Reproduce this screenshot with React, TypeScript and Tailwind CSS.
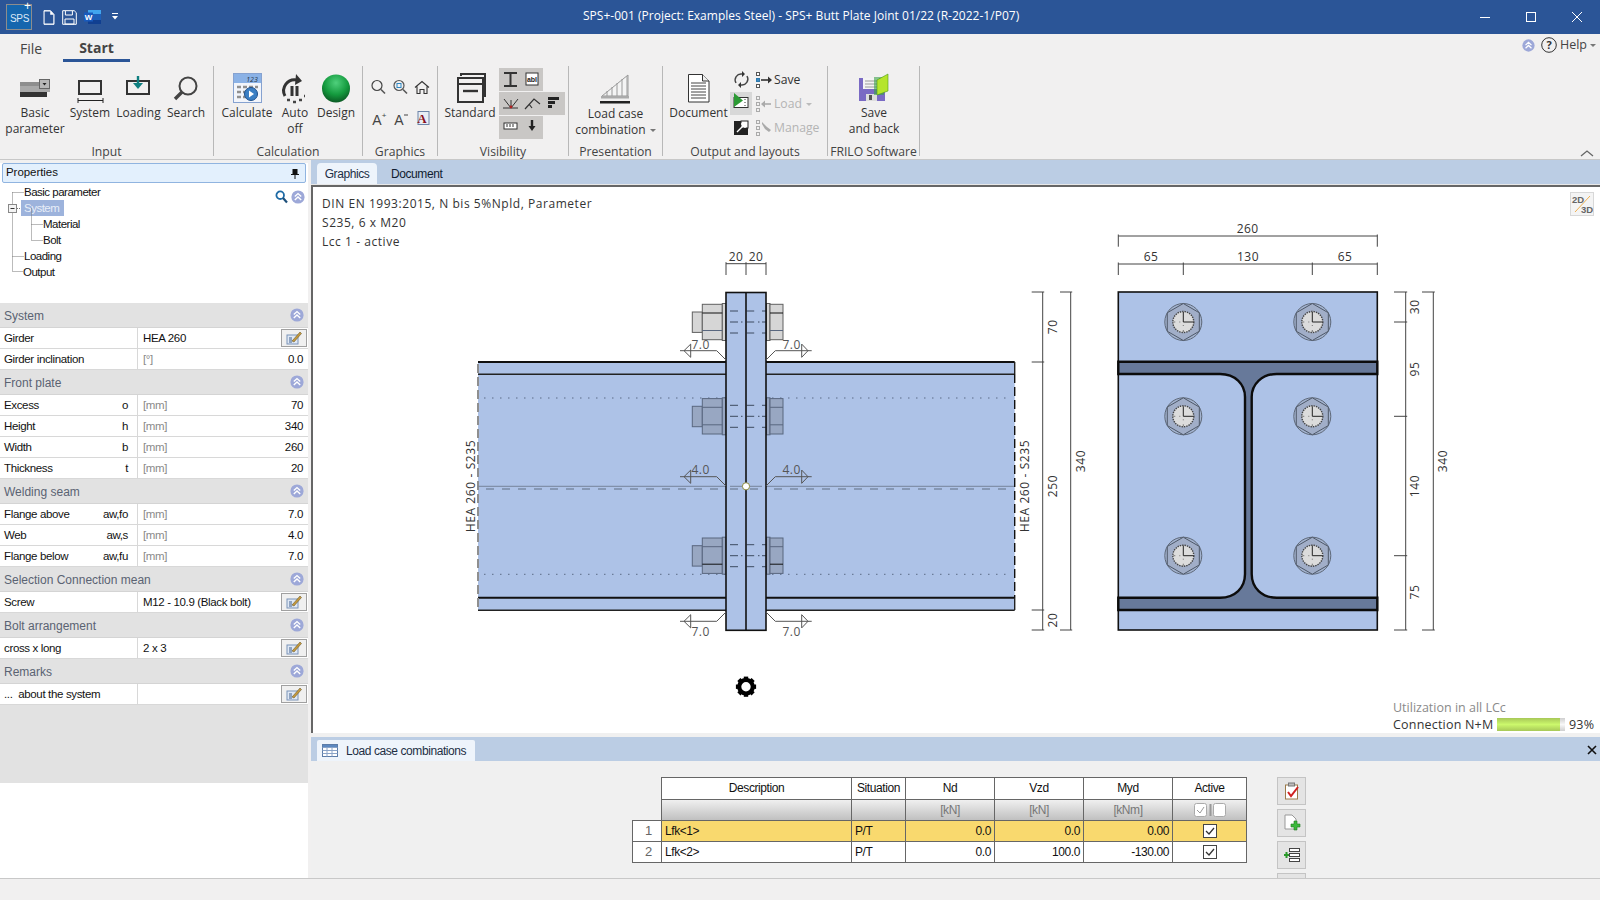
import React from "react";

const BLUE = "#adc2e7";
const DARK = "#67799a";
const DIM = "#444";

function Badge({ size = 14 }: { size?: number }) {
  return (
    <svg width={size} height={size} viewBox="0 0 14 14" className="shrink-0">
      <circle cx="7" cy="7" r="6.6" fill="#9da8d8" />
      <path d="M3.8 6.6 7 3.6l3.2 3M3.8 10 7 7l3.2 3" fill="none" stroke="#fff" strokeWidth="1.4" />
    </svg>
  );
}

function EditBtn() {
  return (
    <div className="w-[26px] h-[18px] mr-[1px] shrink-0 border border-[#a0a0a0] bg-[#f0f0f0] flex items-center justify-center">
      <svg width="16" height="14" viewBox="0 0 16 14">
        <rect x="1" y="4" width="11" height="9" fill="#dfe8f5" stroke="#7b93b8" />
        <path d="M3 7h3M3 9h3M3 11h3" stroke="#41618f" />
        <path d="M6 10 14 1l1.5 1.5L8 11z" fill="#c59a3d" stroke="#5b4a20" strokeWidth=".5" />
      </svg>
    </div>
  );
}

function Section({ title }: { title: string }) {
  return (
    <div className="h-[25px] bg-[#e2e2e2] flex items-center justify-between pl-[4px] pr-[4px] text-[12px] text-[#5a6372] border-b border-[#d4d4d4]">
      <span className="mt-[1px]">{title}</span>
      <Badge />
    </div>
  );
}

function Row({ label, sym, unit, value, edit }: { label: string; sym?: string; unit?: string; value?: string; edit?: boolean }) {
  return (
    <div className="h-[21px] bg-white flex items-center border-b border-[#d8d8d8] text-[11.5px] tracking-[-0.35px] text-[#111]">
      <div className="w-[138px] h-full shrink-0 flex items-center justify-between pt-[1px] pl-[4px] pr-[9px] border-r border-[#d8d8d8]">
        <span>{label}</span>
        {sym ? <span>{sym}</span> : null}
      </div>
      <div className="flex-1 h-full flex items-center justify-between pt-[1px] pl-[5px] pr-[5px]">
        {unit ? <span className="text-[#8a8a8a]">{unit}</span> : <span>{edit ? value : ""}</span>}
        {edit ? null : <span>{value}</span>}
      </div>
      {edit ? <EditBtn /> : null}
    </div>
  );
}

function Big({ left, w, label, label2, caret, children }: { left: number; w: number; label: string; label2?: string; caret?: boolean; children?: React.ReactNode }) {
  return (
    <div className="shrink-0 flex flex-col items-center pt-[2px]" style={{ width: w }}>
      <svg width={w} height={37} viewBox={`${left} 68 ${w} 37`} className="overflow-visible">
        {children}
      </svg>
      <div className="text-[12px] leading-[16px] text-center text-[#333] whitespace-nowrap">{label}</div>
      {label2 ? (
        <div className="text-[12px] leading-[16px] text-center text-[#333] whitespace-nowrap">
          {label2}
          {caret ? <span className="inline-block ml-[4px] mb-[2px] border-x-[3px] border-x-transparent border-t-[3px] border-t-[#777]" /> : null}
        </div>
      ) : null}
    </div>
  );
}

function Group({ w, label, children }: { w: number; label: string; children: React.ReactNode }) {
  return (
    <div className="shrink-0 h-[90px] mt-[4px] border-r border-[#b8b8b8] flex flex-col" style={{ width: w }}>
      <div className="h-[78px] shrink-0 flex items-start">{children}</div>
      <div className="h-[16px] shrink-0 leading-[16px] text-center text-[12.2px] text-[#444] whitespace-nowrap">{label}</div>
    </div>
  );
}

function VT({ x, y, children, size = 12 }: { x: number; y: number; children: React.ReactNode; size?: number }) {
  return (
    <text x={x} y={y} transform={`rotate(-90 ${x} ${y})`} textAnchor="middle" dominantBaseline="central" fontSize={size} letterSpacing=".6" fill="#333">
      {children}
    </text>
  );
}

function HT({ x, y, children, fill = "#333" }: { x: number; y: number; children: React.ReactNode; fill?: string }) {
  return (
    <text x={x} y={y} textAnchor="middle" dominantBaseline="central" fontSize="12" letterSpacing=".5" fill={fill}>
      {children}
    </text>
  );
}

function SideBolt({ cy, fill, stroke, upper, lower }: { cy: number; fill: string; stroke: string; upper: string; lower: string }) {
  return (
    <g stroke={stroke} strokeWidth="1">
      <rect x="692.3" y={cy - 10} width="10" height="20.4" fill={fill} />
      <rect x="702.3" y={cy - 17.7} width="20" height="35.4" fill={fill} />
      <rect x="722.3" y={cy - 18.5} width="3.7" height="37" fill={fill} />
      <rect x="766.5" y={cy - 18.5} width="3.5" height="37" fill={fill} />
      <rect x="770" y={cy - 17.7} width="13" height="35.4" fill={fill} />
      <path d={`M702.3 ${cy - 9}h20M770 ${cy - 9}h13`} stroke={upper} />
      <path d={`M702.3 ${cy + 8.5}h20M770 ${cy + 8.5}h13`} stroke={lower} />
    </g>
  );
}

function FrontBolt({ cx, cy }: { cx: number; cy: number }) {
  const R = 18.5;
  const hx = R * 0.866;
  return (
    <g>
      <circle cx={cx} cy={cy} r={R} fill="#a3b3cf" stroke="#5e6878" strokeWidth="1" />
      <polygon points={`${cx},${cy - R} ${cx + hx},${cy - R / 2} ${cx + hx},${cy + R / 2} ${cx},${cy + R} ${cx - hx},${cy + R / 2} ${cx - hx},${cy - R / 2}`} fill="#a1aec8" stroke="#4e5868" strokeWidth="1" />
      <circle cx={cx} cy={cy} r="10.5" fill="#dcdcdc" stroke="#444" strokeWidth="1.4" strokeDasharray="1.4 1" />
      <path d={`M${cx} ${cy}V${cy - 10}M${cx} ${cy}H${cx + 10}`} stroke="#222" strokeWidth="1" />
      <path d={`M${cx - 10} ${cy}h2M${cx - 4} ${cy}h1M${cx} ${cy + 3}v1M${cx} ${cy + 8}v2`} stroke="#777" strokeWidth="1" />
    </g>
  );
}

function Weld({ dir, y0, yl, label, ty }: { dir: 1 | -1; y0: number; yl: number; label: string; ty: number }) {
  const x0 = dir === -1 ? 726 : 766;
  const bend = x0 + dir * 9.3;
  const end = dir === -1 ? 680 : 811.7;
  const tip = dir === -1 ? 684 : 808;
  const base = dir === -1 ? 690.7 : 801.7;
  const tx = dir === -1 ? 700.7 : 791.7;
  return (
    <g fill="none" stroke="#555" strokeWidth="1">
      <path d={`M${x0} ${y0}L${bend} ${yl}H${end}`} />
      <path d={`M${tip} ${yl}L${base} ${yl - 6.6}V${yl + 6.6}Z`} />
      <g stroke="none">
        <HT x={tx} y={ty} fill="#555">
          {label}
        </HT>
      </g>
    </g>
  );
}

function VDim({ x, x0, ticks }: { x: number; x0: number; ticks: number[] }) {
  return (
    <g stroke={DIM} strokeWidth="1" fill="none">
      <path d={`M${x} ${ticks[0]}V${ticks[ticks.length - 1]}`} />
      {ticks.map((t) => (
        <path key={t} d={`M${x0} ${t}H${x + 1.5}`} />
      ))}
    </g>
  );
}

function HDim({ y, y1, ticks }: { y: number; y1: number; ticks: number[] }) {
  return (
    <g stroke={DIM} strokeWidth="1" fill="none">
      <path d={`M${ticks[0]} ${y}H${ticks[ticks.length - 1]}`} />
      {ticks.map((t) => (
        <path key={t} d={`M${t} ${y - 1.5}V${y1}`} />
      ))}
    </g>
  );
}

function Drawing() {
  const bolts = [322, 416.3, 555.7];
  const gearTeeth = [0, 45, 90, 135, 180, 225, 270, 315];
  return (
    <svg width="1287" height="546" className="absolute left-0 top-0" style={{ fontFamily: '"Open Sans", sans-serif' }}>
      <g transform="translate(-313 -187)">
        {/* side view beam */}
        <rect x="478" y="362" width="536.7" height="248.3" fill={BLUE} />
        <path d="M478 362H726M766 362H1014.7" stroke="#111" strokeWidth="2" />
        <path d="M478 374.3H726M766 374.3H1014.7" stroke="#222" strokeWidth="1.6" />
        <path d="M478 597.7H726M766 597.7H1014.7" stroke="#111" strokeWidth="2" />
        <path d="M478 610.3H726M766 610.3H1014.7" stroke="#222" strokeWidth="1.6" />
        <path d="M478 364V610" stroke="#8f8f8f" strokeWidth="2" strokeDasharray="9 4" />
        <path d="M1014.7 374V598" stroke="#111" strokeWidth="1.4" strokeDasharray="9 4" />
        <path d="M1014.7 362V374M1014.7 598V610" stroke="#222" strokeWidth="1.4" />
        <path d="M484 398H1008M484 574.3H1008" stroke="#5b6b86" strokeWidth="1" strokeDasharray="1.5 6.5" />
        <path d="M478 486.3H1014" stroke="#76849c" strokeWidth="1" />
        <path d="M486 489H1008" stroke="#7a8aa5" strokeWidth="1.4" strokeDasharray="8 8" />
        {bolts.map((b, i) => (
          <SideBolt
            key={b}
            cy={b}
            fill={i === 0 ? "#d6d6d6" : "#98a7c2"}
            stroke={i === 0 ? "#606060" : "#59677f"}
            upper={i === 0 ? "#111" : "#59677f"}
            lower={i === 2 ? "#111" : "#59677f"}
          />
        ))}
        <rect x="726" y="292.5" width="40" height="337.8" fill={BLUE} />
        {bolts.map((b) => (
          <path key={b} d={`M730 ${b - 11}h8M746.7 ${b - 11}h7.5M762 ${b - 11}h4M730 ${b + 11}h8M746.7 ${b + 11}h7.5M762 ${b + 11}h4M730 ${b}h8M741 ${b}h1.5M746.7 ${b}h7.5M758 ${b}h1.5M762 ${b}h4`} stroke="#3c4a60" strokeWidth="1" />
        ))}
        <path d="M730 486.3H762" stroke="#76849c" />
        <path d="M730 489h8M750 489h8" stroke="#7a8aa5" strokeWidth="1.4" />
        <rect x="726" y="292.5" width="40" height="337.8" fill="none" stroke="#111" strokeWidth="1.6" />
        <path d="M746 292.5V630" stroke="#111" strokeWidth="1.6" />
        <circle cx="746" cy="486.3" r="3.6" fill="#fff" stroke="#8c8c40" strokeWidth="1" />
        <Weld dir={-1} y0={360} yl={350.7} label="7.0" ty={344} />
        <Weld dir={1} y0={360} yl={350.7} label="7.0" ty={344} />
        <Weld dir={-1} y0={486} yl={476.7} label="4.0" ty={469.7} />
        <Weld dir={1} y0={486} yl={476.7} label="4.0" ty={469.7} />
        <Weld dir={-1} y0={612} yl={621.3} label="7.0" ty={631.7} />
        <Weld dir={1} y0={612} yl={621.3} label="7.0" ty={631.7} />
        <HDim y={263.7} y1={275} ticks={[726, 746, 766]} />
        <HT x={736} y={256.7}>20</HT>
        <HT x={756} y={256.7}>20</HT>
        <VT x={470.7} y={486}>HEA 260 - S235</VT>
        <VT x={1024} y={486}>HEA 260 - S235</VT>

        <VDim x={1042.7} x0={1031.7} ticks={[292, 362, 610, 630]} />
        <VDim x={1070.7} x0={1060} ticks={[292, 630]} />
        <VT x={1052.7} y={326.7}>70</VT>
        <VT x={1052.7} y={486}>250</VT>
        <VT x={1052.7} y={620}>20</VT>
        <VT x={1080.7} y={461}>340</VT>

        {/* front view */}
        <rect x="1118.3" y="292" width="259" height="338" fill={BLUE} stroke="#111" strokeWidth="1.6" />
        <path
          d="M1118.3 361.7H1377.3V374H1276.7C1262 374 1251.7 384 1251.7 397V574C1251.7 588 1262 597.7 1276.7 597.7H1377.3V610H1118.3V597.7H1220C1235 597.7 1245 588 1245 574V397C1245 384 1235 374 1220 374H1118.3Z"
          fill={DARK}
          stroke="#0c0c0c"
          strokeWidth="2.4"
        />
        {bolts.map((b) => (
          <g key={b}>
            <FrontBolt cx={1183.3} cy={b} />
            <FrontBolt cx={1312.3} cy={b} />
          </g>
        ))}
        <HDim y={236} y1={246.7} ticks={[1118.3, 1377.3]} />
        <HDim y={264} y1={275} ticks={[1118.3, 1183.3, 1312.3, 1377.3]} />
        <HT x={1247.7} y={228.3}>260</HT>
        <HT x={1151} y={256.7}>65</HT>
        <HT x={1248} y={256.7}>130</HT>
        <HT x={1345} y={256.7}>65</HT>
        <VDim x={1405.7} x0={1394} ticks={[292, 322, 416.3, 555.7, 630]} />
        <VDim x={1433.3} x0={1422} ticks={[292, 630]} />
        <VT x={1414.3} y={306.7}>30</VT>
        <VT x={1414.3} y={369}>95</VT>
        <VT x={1414.3} y={486}>140</VT>
        <VT x={1414.3} y={592}>75</VT>
        <VT x={1442.7} y={461}>340</VT>

        {/* gear */}
        <circle cx="746" cy="686.7" r="6.8" fill="none" stroke="#000" strokeWidth="4.2" />
        {gearTeeth.map((a) => (
          <path key={a} d="M746 676.6v3" transform={`rotate(${a} 746 686.7)`} stroke="#000" strokeWidth="4.4" />
        ))}
      </g>
    </svg>
  );
}

function HeadCell({ children, last }: { children?: React.ReactNode; last?: boolean }) {
  return <div className={`h-[22px] pb-[1px] border-t border-l border-[#666] bg-white flex items-center justify-center ${last ? "border-r" : ""}`}>{children}</div>;
}
function SubCell({ children, last }: { children?: React.ReactNode; last?: boolean }) {
  return <div className={`h-[21px] pb-[1px] border-t border-l border-[#666] bg-gradient-to-b from-[#f0f0f0] to-[#c0c0c0] flex items-center justify-center text-[#777] ${last ? "border-r" : ""}`}>{children}</div>;
}
function Cell({ children, y, right, center, last, bottom }: { children?: React.ReactNode; y?: boolean; right?: boolean; center?: boolean; last?: boolean; bottom?: boolean }) {
  return (
    <div
      className={`h-[21px] pb-[1px] border-t border-l border-[#666] flex items-center px-[3px] ${y ? "bg-[#f9d96e]" : "bg-white"} ${right ? "justify-end" : ""} ${center ? "justify-center" : ""} ${last ? "border-r" : ""} ${bottom ? "border-b h-[22px]" : ""}`}
    >
      {children}
    </div>
  );
}
function Check() {
  return (
    <svg width="14" height="14" viewBox="0 0 14 14">
      <rect x=".5" y=".5" width="13" height="13" fill="#fff" stroke="#444" />
      <path d="M3 7l3 3 5-6" fill="none" stroke="#333" strokeWidth="1.3" />
    </svg>
  );
}
function SideBtn({ children }: { children?: React.ReactNode }) {
  return <div className="w-[29px] h-[28px] shrink-0 bg-[#e4e4e4] border border-[#c4c4c4] flex items-center justify-center">{children}</div>;
}

function Ribbon() {
  return (
    <div className="flex h-[97px] relative">
      <Group w={214} label="Input">
        <Big left={0} w={70} label="Basic" label2="parameter">
          <rect x="20" y="82" width="26" height="4" fill="#8e8e8e" />
          <rect x="20" y="86" width="30" height="6" fill="#a9a9a9" />
          <rect x="20" y="92" width="27" height="5" fill="#333" />
          <rect x="39.5" y="79.5" width="10" height="9" fill="#b8b8b8" stroke="#666" />
          <path d="M42.5 83h4l-2 2.5z" fill="#222" />
        </Big>
        <Big left={70} w={40} label="System">
          <rect x="79" y="81" width="22" height="13" fill="none" stroke="#333" strokeWidth="2" />
          <path d="M78 100.5h25M78 98v5M103 98v5" stroke="#222" strokeWidth="1" />
        </Big>
        <Big left={110} w={57} label="Loading">
          <rect x="127" y="81" width="22" height="13" fill="none" stroke="#333" strokeWidth="2" />
          <path d="M138 76v8" stroke="#0f7f80" strokeWidth="2.4" />
          <path d="M133 83h10l-5 6z" fill="#0f7f80" />
        </Big>
        <Big left={167} w={38} label="Search">
          <circle cx="188" cy="86" r="8.5" fill="none" stroke="#444" strokeWidth="2" />
          <path d="M182 92l-7 7" stroke="#444" strokeWidth="3.4" />
        </Big>
      </Group>
      <Group w={149} label="Calculation">
        <Big left={213} w={66} label="Calculate">
          <rect x="232.5" y="73.5" width="28" height="29" fill="#f2f5fb" stroke="#86a2d0" />
          <rect x="233" y="74" width="27" height="9" fill="#8bb2e6" />
          <text x="251" y="81.5" fontSize="7" fontStyle="italic" textAnchor="middle" fill="#234">123</text>
          <path d="M236 87h4M242 87h4M248 87h4M254 87h3M236 92h4M242 92h4M236 97h4M242 97h4" stroke="#909090" strokeWidth="2.4" />
          <circle cx="250" cy="94" r="6.5" fill="#3b7fc4" stroke="#1e4f8c" />
          <path d="M248 90.5v7l5-3.5z" fill="#fff" />
        </Big>
        <Big left={279} w={30} label="Auto" label2="off">
          <path d="M284 96a11 11 0 0 1 12-16" fill="none" stroke="#333" strokeWidth="3" />
          <path d="M295 74l6 7-7 4z" fill="#333" />
          <path d="M291 86v10M296 86v10" stroke="#333" strokeWidth="3" />
          <path d="M286 100h3M292 102h3M298 100h3M303 96h1" stroke="#444" strokeWidth="2.4" />
        </Big>
        <Big left={309} w={52} label="Design">
          <defs>
            <radialGradient id="gs" cx="50%" cy="30%" r="70%">
              <stop offset="0" stopColor="#4fd07c" />
              <stop offset=".6" stopColor="#149a3e" />
              <stop offset="1" stopColor="#0b5a24" />
            </radialGradient>
          </defs>
          <circle cx="335" cy="88.5" r="14" fill="url(#gs)" />
        </Big>
      </Group>
      <Group w={75} label="Graphics">
        <svg width="74" height="76" viewBox="362 68 74 76" className="shrink-0">
          <circle cx="376" cy="87.5" r="5" fill="none" stroke="#444" strokeWidth="1.2" />
          <path d="M380 91.5l4 4" stroke="#555" strokeWidth="1.6" />
          <circle cx="398" cy="87.5" r="5" fill="none" stroke="#555" strokeWidth="1.2" />
          <rect x="396" y="85.5" width="4" height="4" fill="none" stroke="#2c87c4" />
          <path d="M402 91.5l4 4" stroke="#555" strokeWidth="1.6" />
          <path d="M414 89.5l7-6 7 6M416 88.5v7h3v-4h4v4h3v-7" fill="none" stroke="#333" strokeWidth="1.1" />
          <text x="376" y="127" fontSize="14" fill="#444" textAnchor="middle" fontFamily="Liberation Sans, sans-serif">A</text>
          <text x="383" y="120" fontSize="8" fill="#444" textAnchor="middle" fontFamily="Liberation Sans, sans-serif">+</text>
          <text x="398" y="127" fontSize="14" fill="#444" textAnchor="middle" fontFamily="Liberation Sans, sans-serif">A</text>
          <path d="M403 117h4" stroke="#444" />
          <rect x="417" y="113.5" width="11" height="13" fill="#e8edf5" stroke="#6d84a8" />
          <text x="421" y="125" fontSize="13" fontWeight="700" fill="#8a1020" textAnchor="middle" fontFamily="Liberation Serif, serif">A</text>
        </svg>
      </Group>
      <Group w={131} label="Visibility">
        <div className="pl-[3px] shrink-0">
          <Big left={440} w={58} label="Standard">
            <path d="M460 76V74h24v22h-2" fill="none" stroke="#333" strokeWidth="2" />
            <rect x="457" y="78" width="25" height="24" fill="#f1f0f0" stroke="#333" strokeWidth="2" />
            <path d="M457 84h25" stroke="#333" strokeWidth="2" />
            <path d="M462 91h15" stroke="#333" strokeWidth="2.4" />
          </Big>
        </div>
        <div className="flex flex-col gap-[1px] pt-[2px] shrink-0">
          <div className="w-[44px] h-[23px] bg-[#c9c7c5]">
            <svg width="44" height="23" viewBox="498 68 44 23">
              <path d="M503 73h13M503 86h13M509.5 73v13" stroke="#333" strokeWidth="2" />
              <rect x="525" y="73" width="12" height="12" fill="#fff" stroke="#333" />
              <text x="531" y="82" fontSize="7" fontWeight="700" textAnchor="middle" fill="#222" fontFamily="Liberation Sans, sans-serif">abl</text>
            </svg>
          </div>
          <div className="w-[66px] h-[23px] bg-[#c9c7c5]">
            <svg width="66" height="23" viewBox="498 92 66 23">
              <path d="M502 108h15M510 108l-7-9M510 108l7-9M510 108v-8" stroke="#333" fill="none" />
              <circle cx="510" cy="107" r="1.4" fill="#b02020" />
              <path d="M524 109l9-10 6 5M528 104l3 4" stroke="#333" fill="none" strokeWidth="1.2" />
              <path d="M547 97h11v3h-11zM547 101h7v3h-7zM547 105h4v3h-4z" fill="#222" />
            </svg>
          </div>
          <div className="w-[44px] h-[23px] bg-[#c9c7c5]">
            <svg width="44" height="23" viewBox="498 116 44 23">
              <rect x="503" y="123" width="13" height="6" fill="#fff" stroke="#333" />
              <path d="M506 124v3M509 124v3M512 124v3" stroke="#333" />
              <path d="M531 120v8" stroke="#222" strokeWidth="2.4" />
              <path d="M527.5 126h7l-3.5 5z" fill="#222" />
            </svg>
          </div>
        </div>
      </Group>
      <Group w={94} label="Presentation">
        <div className="pt-[1px] shrink-0">
          <Big left={568} w={93} label="Load case" label2="combination" caret>
            <path d="M601 95L627 74V95Z" fill="#f4f4f4" stroke="#999" strokeWidth="1" />
            <path d="M606 90v5M611 86v9M616 82v13M621 78v17M626 75v20" stroke="#9a9a9a" />
            <rect x="600" y="95" width="28" height="2.5" fill="#aaa" />
            <rect x="599" y="100" width="30" height="2.5" fill="#222" />
          </Big>
        </div>
      </Group>
      <Group w={165} label="Output and layouts">
        <div className="pl-[4px] shrink-0">
          <Big left={666} w={63} label="Document">
            <path d="M687.5 74.5h14l6.5 6.5v21h-20.5z" fill="#fff" stroke="#333" />
            <path d="M701.5 74.5v6.5h6.5" fill="#eee" stroke="#333" />
            <path d="M690 83h15M690 86h15M690 89h15M690 92h15M690 95h15M690 98h15" stroke="#444" />
          </Big>
        </div>
        <div className="flex flex-col pt-[2px] shrink-0 text-[12.2px]">
          <div className="h-[24px] flex items-center text-[#333]">
            <svg width="44" height="24" viewBox="729 68 44 24">
              <path d="M735 83a6 6 0 0 1 6-9M746 76a6 6 0 0 1-6 9" fill="none" stroke="#444" strokeWidth="1.4" />
              <path d="M741 71l3 3-3 3zM740 82l-3 3 3 3z" fill="#333" />
              <rect x="755.5" y="72.5" width="3" height="3" fill="#fff" stroke="#555" />
              <rect x="755.5" y="78.5" width="3" height="3" fill="#3a8ac4" stroke="#2d78ac" />
              <rect x="755.5" y="84.5" width="3" height="3" fill="#fff" stroke="#555" />
              <path d="M760 80h9" stroke="#333" strokeWidth="1.6" />
              <path d="M767 76.5l4 3.5-4 3.5z" fill="#333" />
            </svg>
            <span>Save</span>
          </div>
          <div className="h-[24px] flex items-center text-[#b4b4b4]">
            <svg width="44" height="24" viewBox="729 92 44 24">
              <rect x="729" y="92" width="22" height="23" fill="#d8d8d8" />
              <rect x="733" y="97.5" width="14" height="10" fill="#fff" stroke="#333" />
              <path d="M733 93v14l9-6.5z" fill="#2c9a34" />
              <path d="M744 99v1M744 102v1M744 105v1" stroke="#333" />
              <rect x="755.5" y="96.5" width="3" height="3" fill="none" stroke="#aaa" />
              <rect x="755.5" y="102.5" width="3" height="3" fill="none" stroke="#aaa" />
              <rect x="755.5" y="108.5" width="3" height="3" fill="none" stroke="#aaa" />
              <path d="M761 104h9" stroke="#aaa" strokeWidth="1.6" />
              <path d="M764 100.5l-4 3.5 4 3.5z" fill="#aaa" />
            </svg>
            <span>Load</span>
            <span className="inline-block ml-[4px] border-x-[3px] border-x-transparent border-t-[3px] border-t-[#bbb]" />
          </div>
          <div className="h-[24px] flex items-center text-[#b4b4b4]">
            <svg width="44" height="24" viewBox="729 116 44 24">
              <rect x="733" y="121" width="14" height="14" fill="#222" />
              <rect x="740" y="121" width="7" height="7" fill="#fff" stroke="#222" />
              <path d="M736 132l8-8M740 124h4v4" fill="none" stroke="#fff" strokeWidth="1.4" />
              <rect x="755.5" y="120.5" width="3" height="3" fill="none" stroke="#aaa" />
              <rect x="755.5" y="126.5" width="3" height="3" fill="none" stroke="#aaa" />
              <rect x="755.5" y="132.5" width="3" height="3" fill="none" stroke="#aaa" />
              <path d="M761 122l5 5 4 3-2 2-4-3-3-5z" fill="#aaa" />
            </svg>
            <span>Manage</span>
          </div>
        </div>
      </Group>
      <Group w={92} label="FRILO Software">
        <Big left={827} w={92} label="Save" label2="and back">
          <rect x="858" y="78" width="26" height="23" fill="#7a6ac4" />
          <rect x="862" y="78" width="16" height="11" fill="#f4f4f4" />
          <path d="M864 81h12M864 84h12M864 87h12" stroke="#9a9a9a" />
          <rect x="865" y="94" width="11" height="7" fill="#ddd" />
          <rect x="868" y="95" width="3" height="5" fill="#555" />
          <path d="M873 77h10v18h-10z" fill="#3aa04a" opacity=".6" />
          <path d="M876 80l11-6v17l-11 4z" fill="#b5e52c" stroke="#4d9a1a" strokeWidth=".6" />
        </Big>
      </Group>
      <svg width="14" height="8" viewBox="0 0 14 8" className="absolute right-[6px] bottom-[2px]">
        <path d="M1 7l6-5 6 5" fill="none" stroke="#666" strokeWidth="1.3" />
      </svg>
    </div>
  );
}

export default function App() {
  return (
    <div className="w-[1600px] h-[900px] overflow-hidden bg-[#f1f0f0] flex flex-col" style={{ fontFamily: '"Liberation Sans", Arial, sans-serif' }}>
      {/* title bar */}
      <div className="h-[34px] shrink-0 bg-[#2b5597] flex items-center relative text-white">
        <div className="ml-[6px] w-[26px] h-[26px] bg-[#1566ae] border border-[#8d8d8d] flex items-center justify-start relative shrink-0">
          <span className="text-[10px] leading-[10px] text-[#dce8f6] tracking-[-0.3px] mt-[4px] ml-[3px]">SPS</span>
          <span className="absolute right-[0px] top-[-5px] text-[12px] leading-[12px]">+</span>
        </div>
        <svg width="12" height="15" viewBox="0 0 12 15" className="ml-[11px] shrink-0">
          <path d="M1 .7h6.5L11 4.5v9.8H1z" fill="#fff" stroke="#fff" />
          <path d="M1.6 1.4h5.6v3.4h3.1v8.8H1.6z" fill="#2b5597" />
        </svg>
        <svg width="15" height="15" viewBox="0 0 15 15" className="ml-[7px] shrink-0">
          <path d="M.7.7h11.5l2.1 2v11.6H.7z" fill="none" stroke="#fff" />
          <path d="M3.4 1v4h7V1M3 9h9v5H3z" fill="none" stroke="#fff" />
        </svg>
        <svg width="17" height="16" viewBox="0 0 17 16" className="ml-[7px] shrink-0">
          <rect x="4" y="1" width="13" height="14" fill="#1d5fb8" />
          <rect x="4" y="1" width="13" height="4" fill="#41a5ee" />
          <rect x="4" y="11" width="13" height="4" fill="#103f91" />
          <rect x="0" y="3.5" width="9" height="9" fill="#185abd" />
          <text x="4.5" y="11" fontSize="8" fontWeight="700" fill="#fff" textAnchor="middle">W</text>
        </svg>
        <svg width="6" height="8" viewBox="0 0 6 8" className="ml-[11px] shrink-0">
          <path d="M0 .5h6" stroke="#fff" />
          <path d="M0 3h6L3 6.5z" fill="#fff" />
        </svg>
        <div className="absolute left-[583px] top-[7px] text-[12px] leading-[17px] tracking-[0.02px] whitespace-nowrap" style={{ fontFamily: '"Open Sans", sans-serif' }}>
          SPS+-001 (Project: Examples Steel) - SPS+ Butt Plate Joint 01/22 (R-2022-1/P07)
        </div>
        <svg width="130" height="34" viewBox="1470 0 130 34" className="ml-auto shrink-0">
          <path d="M1480 17.5h10" stroke="#fff" />
          <rect x="1526.5" y="12.5" width="9" height="9" fill="none" stroke="#fff" />
          <path d="M1572 12l10 10M1582 12l-10 10" stroke="#fff" />
        </svg>
      </div>

      {/* tabs */}
      <div className="h-[28px] shrink-0 flex items-start relative" style={{ fontFamily: '"Open Sans", sans-serif' }}>
        <div className="w-[63px] h-[28px] flex items-center pl-[20px] text-[14px] text-[#444]">File</div>
        <div className="w-[67px] h-[28px] pt-[1px] flex items-center justify-center border-b-[3px] border-[#2b5597] text-[14px] font-bold text-[#444]">Start</div>
        <div className="ml-auto h-[22px] flex items-center pr-[4px] text-[12.5px] text-[#444]">
          <Badge size={13} />
          <svg width="16" height="16" viewBox="0 0 16 16" className="ml-[6px] mr-[3px]">
            <circle cx="8" cy="8" r="7.3" fill="none" stroke="#333" />
            <text x="8" y="12" textAnchor="middle" fontSize="11" fontWeight="700" fill="#333">?</text>
          </svg>
          <span>Help</span>
          <span className="inline-block ml-[3px] border-x-[3px] border-x-transparent border-t-[3px] border-t-[#777]" />
        </div>
      </div>

      {/* ribbon */}
      <div className="shrink-0 border-b border-[#c8c8c8]" style={{ fontFamily: '"Open Sans", sans-serif' }}>
        <Ribbon />
      </div>

      {/* main */}
      <div className="flex-1 flex min-h-0">
        {/* left */}
        <div className="w-[308px] shrink-0 bg-white flex flex-col">
          <div className="h-[3px] bg-[#f1f0f0]" />
          <div className="h-[20px] mx-[2px] border border-[#90b4e0] rounded-[2px] bg-[#e3f0fd] flex items-center justify-between px-[3px] text-[11.5px] tracking-[-0.05px] text-[#111]">
            <span>Properties</span>
            <svg width="8" height="11" viewBox="0 0 8 11" className="mr-[3px]">
              <path d="M1.5 1h5v5h1.5v1H0V6h1.5zM3.5 7h1v4h-1z" fill="#111" />
            </svg>
          </div>
          <div className="h-[120px] relative pt-[1px] text-[11.5px] tracking-[-0.5px] text-[#111]">
            <svg width="60" height="100" className="absolute left-0 top-0">
              <path d="M12.5 9.5h11M12.5 9.5V88.5h10M12.5 73.5h11M17 25.5h4M31.5 25.5V57.5M31.5 41.5h11M31.5 57.5h11" stroke="#777" strokeDasharray="1 1" fill="none" />
              <rect x="8.5" y="21.5" width="8" height="8" fill="#f4f4f4" stroke="#888" />
              <path d="M10.5 25.5h4" stroke="#333" />
            </svg>
            <div className="h-[16px] leading-[16px] pl-[24px]">Basic parameter</div>
            <div className="h-[16px] leading-[16px] pl-[21px]">
              <span className="inline-block w-[43px] bg-[#9db3dc] text-[#e8eef8] pl-[3px]">System</span>
            </div>
            <div className="h-[16px] leading-[16px] pl-[43px]">Material</div>
            <div className="h-[16px] leading-[16px] pl-[43px]">Bolt</div>
            <div className="h-[16px] leading-[16px] pl-[24px]">Loading</div>
            <div className="h-[16px] leading-[16px] pl-[23px]">Output</div>
            <div className="absolute right-[3px] top-[7px] flex items-center gap-[3px]">
              <svg width="13" height="14" viewBox="0 0 13 14">
                <circle cx="5.2" cy="5.2" r="3.8" fill="#fff" stroke="#1d6aa5" strokeWidth="1.8" />
                <path d="M8 8l4 4.5" stroke="#1d4f7a" strokeWidth="2.2" />
              </svg>
              <Badge />
            </div>
          </div>
          <Section title="System" />
          <Row label="Girder" value="HEA 260" edit />
          <Row label="Girder inclination" unit="[°]" value="0.0" />
          <Section title="Front plate" />
          <Row label="Excess" sym="o" unit="[mm]" value="70" />
          <Row label="Height" sym="h" unit="[mm]" value="340" />
          <Row label="Width" sym="b" unit="[mm]" value="260" />
          <Row label="Thickness" sym="t" unit="[mm]" value="20" />
          <Section title="Welding seam" />
          <Row label="Flange above" sym="aw,fo" unit="[mm]" value="7.0" />
          <Row label="Web" sym="aw,s" unit="[mm]" value="4.0" />
          <Row label="Flange below" sym="aw,fu" unit="[mm]" value="7.0" />
          <Section title="Selection Connection mean" />
          <Row label="Screw" value="M12 - 10.9 (Black bolt)" edit />
          <Section title="Bolt arrangement" />
          <Row label="cross x long" value="2 x 3" edit />
          <Section title="Remarks" />
          <Row label={"...\u00a0\u00a0about the system"} value="" edit />
          <div className="h-[78px] bg-[#e2e2e2]" />
        </div>

        {/* right */}
        <div className="flex-1 min-w-0 pl-[3px] flex flex-col">
          <div className="h-[24px] shrink-0 bg-[#bbcde4] flex items-end pl-[6px] text-[12px] tracking-[-0.42px]">
            <div className="w-[60px] h-[21px] rounded-t-[4px] bg-[#eef4fb] flex items-center justify-center text-[#1d2f45]">Graphics</div>
            <div className="ml-[14px] h-[21px] flex items-center text-[#101c30]">Document</div>
          </div>
          <div className="h-[1px] shrink-0 bg-[#e8e8e8]" />
          <div className="h-[548px] shrink-0 bg-white border-t-2 border-l-2 border-[#666] relative overflow-hidden">
            <Drawing />
            <div className="relative pl-[9px] pt-[7px] text-[12px] leading-[19px] tracking-[0.55px] text-[#333]" style={{ fontFamily: '"Open Sans", sans-serif' }}>
              <div>DIN EN 1993:2015, N bis 5%Npld, Parameter</div>
              <div>S235, 6 x M20</div>
              <div>Lcc 1 - active</div>
            </div>
            <div className="absolute right-[6px] top-[5px] w-[24px] h-[24px] bg-[#f4f4f4] border border-[#d8d8d8]">
              <svg width="22" height="22" viewBox="0 0 22 22">
                <path d="M4 19 19 3" stroke="#f0b050" />
                <text x="1" y="10" fontSize="9.5" fontWeight="700" fill="#666">2D</text>
                <text x="10" y="19.5" fontSize="9.5" fontWeight="700" fill="#666">3D</text>
              </svg>
            </div>
            <div className="absolute left-[1080px] bottom-[0px] w-[206px] text-[12.5px] leading-[17px]" style={{ fontFamily: '"Open Sans", sans-serif' }}>
              <div className="text-[#8a8a8a]">Utilization in all LCc</div>
              <div className="flex items-center text-[#333] tracking-[0.2px]">
                <span className="w-[104px] shrink-0 whitespace-nowrap">Connection N+M</span>
                <div className="w-[68px] h-[13px] bg-gradient-to-b from-[#cfcfcf] via-[#f8f8f8] to-[#cfcfcf] shrink-0">
                  <div className="h-full bg-gradient-to-b from-[#a8c858] via-[#ccf86c] to-[#a8c858]" style={{ width: "93%" }} />
                </div>
                <span className="ml-[4px]">93%</span>
              </div>
            </div>
          </div>
          <div className="h-[4px] shrink-0 bg-[#f0f0f0]" />
          <div className="h-[24px] shrink-0 bg-[#bbcde4] flex items-end pl-[6px] text-[12px] tracking-[-0.42px] text-[#1d2f45] relative">
            <div className="w-[158px] h-[21px] rounded-t-[2px] bg-[#eef4fb] flex items-center pl-[5px]">
              <svg width="16" height="13" viewBox="0 0 16 13" className="mr-[8px]">
                <rect x=".5" y=".5" width="15" height="12" fill="#fff" stroke="#5c7ca8" />
                <path d="M.5 3.5h15M.5 6.5h15M.5 9.5h15M5 3.5v9M10 3.5v9" stroke="#8aa4c8" />
                <rect x="1" y="1" width="14" height="2" fill="#5c88c0" />
              </svg>
              <span>Load case combinations</span>
            </div>
            <svg width="10" height="10" viewBox="0 0 10 10" className="absolute right-[3px] top-[8px]">
              <path d="M1 1l8 8M9 1 1 9" stroke="#111" strokeWidth="1.6" />
            </svg>
          </div>
          <div className="flex-1 min-h-0 overflow-hidden bg-[#f0f0f0] flex items-start text-[12px] tracking-[-0.42px] text-[#111]">
            <div className="ml-[321px] mt-[16px] grid grid-cols-[29px_190px_54px_89px_89px_89px_75px] shrink-0">
              <div />
              <HeadCell>Description</HeadCell>
              <HeadCell>Situation</HeadCell>
              <HeadCell>Nd</HeadCell>
              <HeadCell>Vzd</HeadCell>
              <HeadCell>Myd</HeadCell>
              <HeadCell last>Active</HeadCell>
              <div />
              <SubCell />
              <SubCell />
              <SubCell>[kN]</SubCell>
              <SubCell>[kN]</SubCell>
              <SubCell>[kNm]</SubCell>
              <SubCell last>
                <svg width="32" height="14" viewBox="0 0 32 14">
                  <rect x=".5" y=".5" width="12" height="13" rx="2" fill="#fff" stroke="#aaa" />
                  <path d="M3 7l3 3 4-6" fill="none" stroke="#999" />
                  <path d="M16.5 1v12" stroke="#999" strokeWidth="2" />
                  <rect x="19.5" y=".5" width="12" height="13" rx="2" fill="#fff" stroke="#aaa" />
                </svg>
              </SubCell>
              <Cell center>
                <span className="text-[#666] text-[13px] ml-[3px]">1</span>
              </Cell>
              <Cell y>Lfk&lt;1&gt;</Cell>
              <Cell y>P/T</Cell>
              <Cell y right>0.0</Cell>
              <Cell y right>0.0</Cell>
              <Cell y right>0.00</Cell>
              <Cell y center last>
                <Check />
              </Cell>
              <Cell center bottom>
                <span className="text-[#666] text-[13px] ml-[3px]">2</span>
              </Cell>
              <Cell bottom>Lfk&lt;2&gt;</Cell>
              <Cell bottom>P/T</Cell>
              <Cell right bottom>0.0</Cell>
              <Cell right bottom>100.0</Cell>
              <Cell right bottom>-130.00</Cell>
              <Cell center last bottom>
                <Check />
              </Cell>
            </div>
            <div className="ml-[30px] mt-[16px] flex flex-col gap-[4px] shrink-0">
              <SideBtn>
                <svg width="16" height="18" viewBox="0 0 16 18">
                  <rect x="1.5" y="3" width="12" height="14" fill="#fff" stroke="#9a7a4a" />
                  <rect x="4.5" y="1" width="6" height="3" fill="#bbb" stroke="#777" />
                  <path d="M4 10l3 4 7-9" fill="none" stroke="#d02020" strokeWidth="2" />
                </svg>
              </SideBtn>
              <SideBtn>
                <svg width="18" height="18" viewBox="0 0 18 18">
                  <path d="M2 1h7l4 4v10H2z" fill="#fff" stroke="#999" />
                  <path d="M11 7h3v3h3v3h-3v3h-3v-3H8v-3h3z" fill="#3cb83c" stroke="#1f7a1f" strokeWidth=".6" />
                </svg>
              </SideBtn>
              <SideBtn>
                <svg width="18" height="16" viewBox="0 0 18 16">
                  <rect x="6.5" y="1.5" width="10" height="3" fill="#fff" stroke="#444" />
                  <rect x="6.5" y="6.5" width="10" height="3" fill="#fff" stroke="#444" />
                  <rect x="6.5" y="11.5" width="10" height="3" fill="#fff" stroke="#444" />
                  <path d="M3.5 5v6M1 8h5" stroke="#2a9a2a" strokeWidth="2" />
                </svg>
              </SideBtn>
              <SideBtn />
            </div>
          </div>
        </div>
      </div>

      {/* status */}
      <div className="h-[22px] shrink-0 border-t border-[#c8c8c8] bg-[#f1f0f0]" />
    </div>
  );
}
